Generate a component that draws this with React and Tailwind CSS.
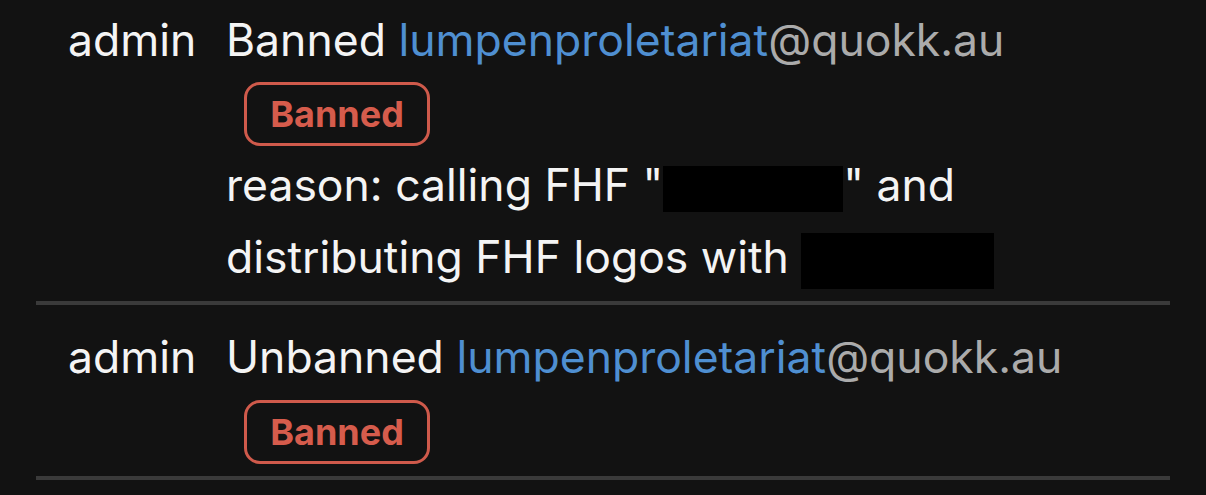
const font = { fontFamily: "Inter, 'Noto Sans', sans-serif" };

function Badge() {
  return (
    <div className="ml-[18px] inline-flex h-[64px] w-[186px] items-center justify-center rounded-[16px] border-[3px] border-[#cf5a4b] text-[36px] font-bold text-[#d65c4c]">
      Banned
    </div>
  );
}

function Redacted({ w, h }) {
  return <span className={`inline-block bg-black align-middle ${w} ${h}`} />;
}

function Entry({ action, children, className }) {
  return (
    <div className={`flex pl-8 ${className}`}>
      <div className="w-[158px] shrink-0 text-[#f4f4f4]">admin</div>
      <div className="flex-1">
        <div className="text-[#f4f4f4]">
          {action} <span className="text-[#4f8fd1]">lumpenproletariat</span>
          <span className="text-[#ababab]">@quokk.au</span>
        </div>
        {children}
      </div>
    </div>
  );
}

export default function App() {
  return (
    <div className="min-h-screen bg-[#121212] pl-[36px] pr-[36px] text-[44.5px] leading-[72px]" style={font}>
      <Entry action="Banned" className="pt-1 pb-2">
        <div className="mt-[6px] mb-[3px] leading-none">
          <Badge />
        </div>
        <div className="text-[#f4f4f4]">
          reason: calling FHF "<Redacted w="w-[180px]" h="h-[46px]" />" and
        </div>
        <div className="text-[#f4f4f4]">
          distributing FHF logos with <Redacted w="w-[193px]" h="h-[56px]" />
        </div>
      </Entry>
      <div className="h-[4px] bg-[#3a3a3a]" />
      <Entry action="Unbanned" className="pt-4 pb-3">
        <div className="mt-[7px] leading-none">
          <Badge />
        </div>
      </Entry>
      <div className="h-[4px] bg-[#3a3a3a]" />
    </div>
  );
}
